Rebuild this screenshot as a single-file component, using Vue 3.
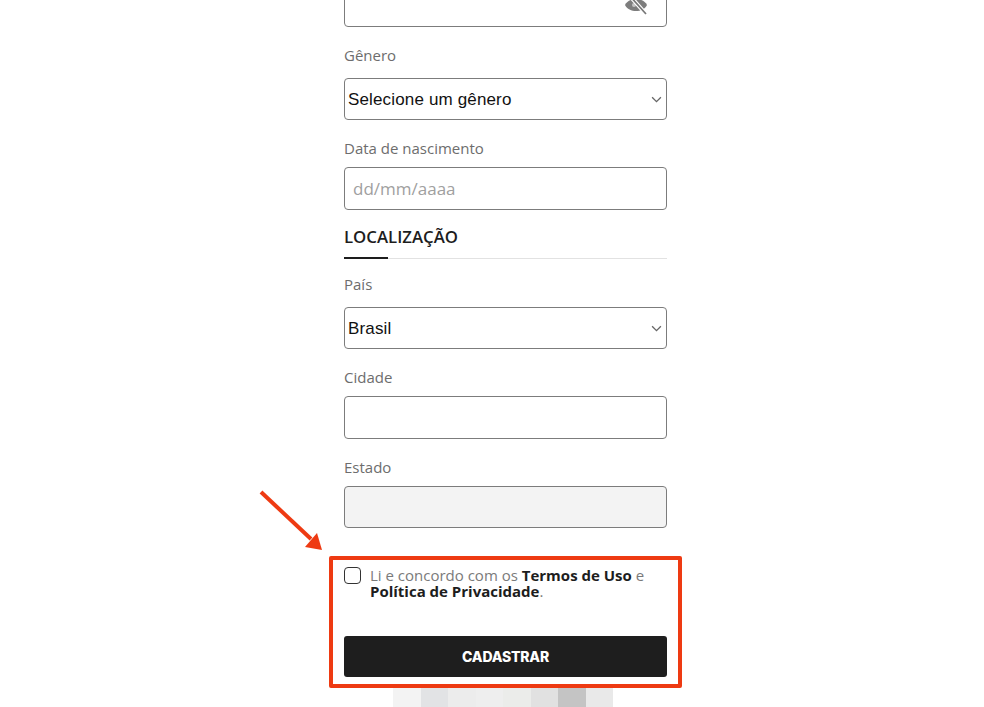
<script setup>
const blurCells = ['#f3f3f3', '#e2e3e5', '#ececec', '#eeeeee', '#ebecea', '#e1e1e1', '#c4c4c4', '#e9e9e9']
</script>

<template>
  <div class="page">
    <form class="form" @submit.prevent>
      <div class="input-wrap">
        <input class="input" type="password" />
        <svg class="eye" viewBox="0 0 24 24" width="24" height="24">
          <path fill="#7d7d7d" d="M1 12C5 4 19 4 23 12C19 20 5 20 1 12Z" />
          <circle cx="10" cy="12" r="2" fill="#c4c4c4" />
          <path d="M5 2L22 21" stroke="#fff" stroke-width="4" />
          <path d="M5 2L22 21" stroke="#777" stroke-width="1.700" />
        </svg>
      </div>

      <label class="label label-select">Gênero</label>
      <div class="select-wrap">
        <select class="select">
          <option>Selecione um gênero</option>
        </select>
        <svg class="chevron" viewBox="0 0 12 8" width="11" height="7">
          <path d="M1 1.500l5 5 5-5" fill="none" stroke="#666" stroke-width="1.500" />
        </svg>
      </div>

      <label class="label">Data de nascimento</label>
      <input class="input" type="text" placeholder="dd/mm/aaaa" />

      <h2 class="section-title">LOCALIZAÇÃO</h2>

      <label class="label label-select first-label">País</label>
      <div class="select-wrap">
        <select class="select">
          <option>Brasil</option>
        </select>
        <svg class="chevron" viewBox="0 0 12 8" width="11" height="7">
          <path d="M1 1.500l5 5 5-5" fill="none" stroke="#666" stroke-width="1.500" />
        </svg>
      </div>

      <label class="label">Cidade</label>
      <input class="input" type="text" />

      <label class="label">Estado</label>
      <input class="input disabled" type="text" disabled />

      <div class="terms">
        <span class="checkbox"></span>
        <p>Li e concordo com os <b>Termos de Uso</b> e <b>Política de Privacidade</b>.</p>
      </div>

      <button class="submit" type="submit">CADASTRAR</button>
    </form>

    <div class="blur-row">
      <span v-for="c in blurCells" :key="c" class="blur-cell" :style="{ background: c }"></span>
    </div>

    <!-- anotação vermelha por cima do formulário -->
    <div class="highlight"></div>
    <svg class="arrow" viewBox="0 0 70 66" width="70" height="66">
      <path d="M2 2L52 49" stroke="#ee3a12" stroke-width="4" fill="none" />
      <path d="M63 60L46 57L58 43Z" fill="#ee3a12" />
    </svg>
  </div>
</template>

<style scoped>
.page {
  position: relative;
  width: 984px;
  height: 707px;
  overflow: hidden;
  background: #fff;
  font-family: "Open Sans", sans-serif;
}

.form {
  display: flex;
  flex-direction: column;
  width: 323px;
  margin: -16px 0 0 344px;
}

.input-wrap {
  position: relative;
}

.eye {
  position: absolute;
  top: 9px;
  right: 19px;
}

.input,
.select {
  display: block;
  width: 100%;
  height: 42.500px;
  box-sizing: border-box;
  border: 1.500px solid #7c7c7c;
  border-radius: 4px;
  background: #fff;
  outline: none;
}

.input {
  padding: 0 8px;
  font: 17px "Open Sans", sans-serif;
  color: #333;
}

.input::placeholder {
  color: #a0a0a0;
  opacity: 1;
}

.input.disabled {
  background: #f3f3f3;
}

.label {
  margin: 18px 0 9px;
  font-size: 15px;
  line-height: 20px;
  color: #6d6d6d;
}

.label-select {
  margin-bottom: 13px;
}

.first-label {
  margin-top: 15px;
}

.select-wrap {
  position: relative;
}

.select {
  appearance: none;
  padding: 2px 3px 0;
  font: 17px "Liberation Sans", sans-serif;
  letter-spacing: 0.150px;
  color: #111;
}

.chevron {
  position: absolute;
  top: 18px;
  right: 5px;
  pointer-events: none;
}

.section-title {
  position: relative;
  margin: 16px 0 0;
  padding-bottom: 10px;
  border-bottom: 1px solid #e2e2e2;
  font-size: 16.800px;
  font-weight: 600;
  line-height: 22px;
  color: #1d1d1d;
}

.section-title::after {
  content: "";
  position: absolute;
  left: 0;
  bottom: -1px;
  width: 44px;
  height: 2px;
  background: #1d1d1d;
}

.terms {
  display: flex;
  gap: 9px;
  margin-top: 39px;
}

.terms p {
  margin: 0;
  font-size: 15px;
  line-height: 16px;
  color: #7a7a7a;
}

.terms b {
  font-weight: 700;
  color: #1d1d1d;
}

.checkbox {
  flex: none;
  width: 17px;
  height: 17px;
  box-sizing: border-box;
  border: 1.500px solid #333;
  border-radius: 4px;
}

.submit {
  height: 41px;
  margin-top: 37px;
  border: 0;
  border-radius: 3px;
  background: #1e1e1e;
  color: #fff;
  font: 800 14px Inter, sans-serif;
  letter-spacing: -0.200px;
}

.blur-row {
  display: flex;
  width: 220px;
  height: 30px;
  margin: 11px 0 0 393px;
}

.blur-cell {
  flex: 1;
}

.highlight {
  position: absolute;
  left: 329px;
  top: 556px;
  width: 353px;
  height: 132px;
  box-sizing: border-box;
  border: 4px solid #ee3a12;
  border-radius: 2px;
}

.arrow {
  position: absolute;
  left: 259px;
  top: 490px;
}
</style>
